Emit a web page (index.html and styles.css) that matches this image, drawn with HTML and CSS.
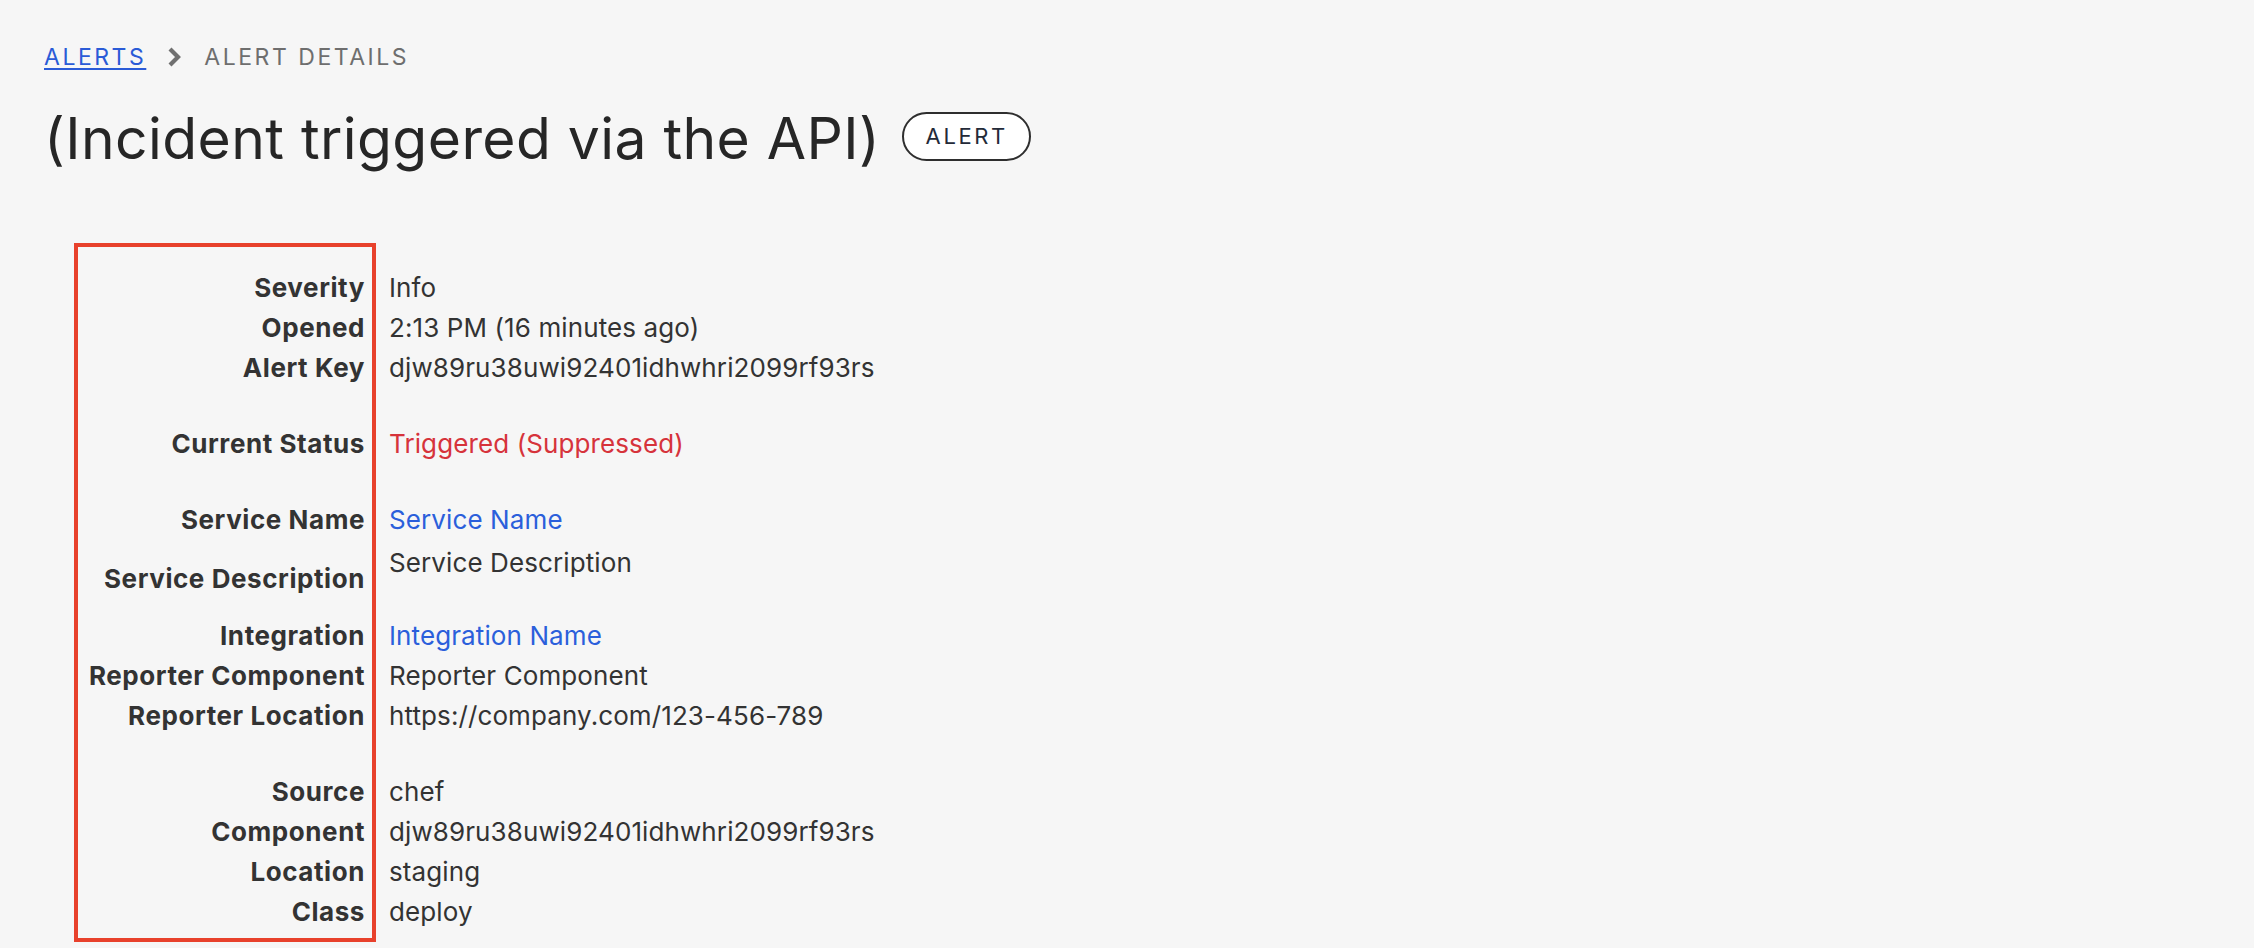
FILE: index.html
```html
<!DOCTYPE html>
<html lang="en">
<head>
<meta charset="utf-8">
<title>Alert Details</title>
<link rel="stylesheet" href="styles.css">
</head>
<body>
<main class="page">
  <nav class="breadcrumb">
    <a class="crumb-link" href="#">ALERTS</a>
    <svg class="crumb-sep" width="16" height="22" viewBox="0 0 16 22"><path d="M4 3 L12 11 L4 19" fill="none" stroke="#707070" stroke-width="4.2" stroke-linejoin="miter"/></svg>
    <span class="crumb-current">ALERT DETAILS</span>
  </nav>
  <header class="title-row">
    <h1 class="title">(Incident triggered via the API)</h1>
    <span class="badge">ALERT</span>
  </header>
  <dl class="details">
    <dt class="label">Severity</dt><dd class="value">Info</dd>
    <dt class="label">Opened</dt><dd class="value">2:13 PM (16 minutes ago)</dd>
    <dt class="label">Alert Key</dt><dd class="value">djw89ru38uwi92401idhwhri2099rf93rs</dd>
    <dt class="label group">Current Status</dt><dd class="value group status">Triggered (Suppressed)</dd>
    <dt class="label group">Service Name</dt><dd class="value group"><a class="link" href="#">Service Name</a></dd>
    <dt class="label desc">Service Description</dt><dd class="value desc">Service Description</dd>
    <dt class="label">Integration</dt><dd class="value"><a class="link" href="#">Integration Name</a></dd>
    <dt class="label">Reporter Component</dt><dd class="value">Reporter Component</dd>
    <dt class="label">Reporter Location</dt><dd class="value">https://company.com/123-456-789</dd>
    <dt class="label group">Source</dt><dd class="value group">chef</dd>
    <dt class="label">Component</dt><dd class="value">djw89ru38uwi92401idhwhri2099rf93rs</dd>
    <dt class="label">Location</dt><dd class="value">staging</dd>
    <dt class="label">Class</dt><dd class="value">deploy</dd>
  </dl>
</main>
</body>
</html>
```
FILE: styles.css
```css
html, body {
  margin: 0;
  padding: 0;
  background: #f6f6f6;
}
body {
  min-height: 100vh;
  font-family: Inter, "Noto Sans", "Liberation Sans", sans-serif;
  color: #333333;
}
.page {
  padding: 41px 0 24px 44px;
}
.breadcrumb {
  display: flex;
  align-items: center;
  height: 32px;
  font-size: 23px;
  letter-spacing: 0.11em;
}
.crumb-link {
  color: #2a5bd7;
  text-decoration: underline;
  text-decoration-thickness: 2px;
  text-underline-offset: 3px;
}
.crumb-sep {
  margin: 0 22px 0 20px;
}
.crumb-current {
  color: #6e6e6e;
}
.title-row {
  display: flex;
  align-items: center;
  gap: 22px;
  margin-top: 32px;
}
.title {
  margin: 0;
  font-size: 57px;
  font-weight: 400;
  line-height: 68px;
  color: #262626;
  letter-spacing: 0.0075em;
}
.badge {
  display: inline-flex;
  align-items: center;
  justify-content: center;
  box-sizing: border-box;
  width: 129px;
  height: 49px;
  border: 2px solid #2e2e2e;
  border-radius: 25px;
  background: #ffffff;
  color: #232a38;
  font-size: 22px;
  letter-spacing: 0.12em;
  margin-top: -6px;
}
.details {
  position: relative;
  display: grid;
  grid-template-columns: 302px 1fr;
  column-gap: 13px;
  margin: 95px 0 0 30px;
  font-size: 26px;
  line-height: 40px;
}
.details::before {
  content: "";
  position: absolute;
  left: 0;
  top: -25px;
  bottom: -10px;
  width: 302px;
  box-sizing: border-box;
  border: 4px solid #e8412c;
  pointer-events: none;
}
.label {
  grid-column: 1;
  margin: 0;
  padding-right: 11px;
  text-align: right;
  font-weight: 700;
  color: #333333;
  letter-spacing: 0.022em;
}
.value {
  grid-column: 2;
  margin: 0;
  color: #333333;
  letter-spacing: 0.004em;
}
.group {
  margin-top: 36px;
}
.label.desc {
  padding-top: 19px;
  height: 57px;
}
.value.desc {
  padding-top: 3px;
}
.status {
  color: #d6333b;
}
.link {
  color: #2b5fdb;
  text-decoration: none;
}
```
